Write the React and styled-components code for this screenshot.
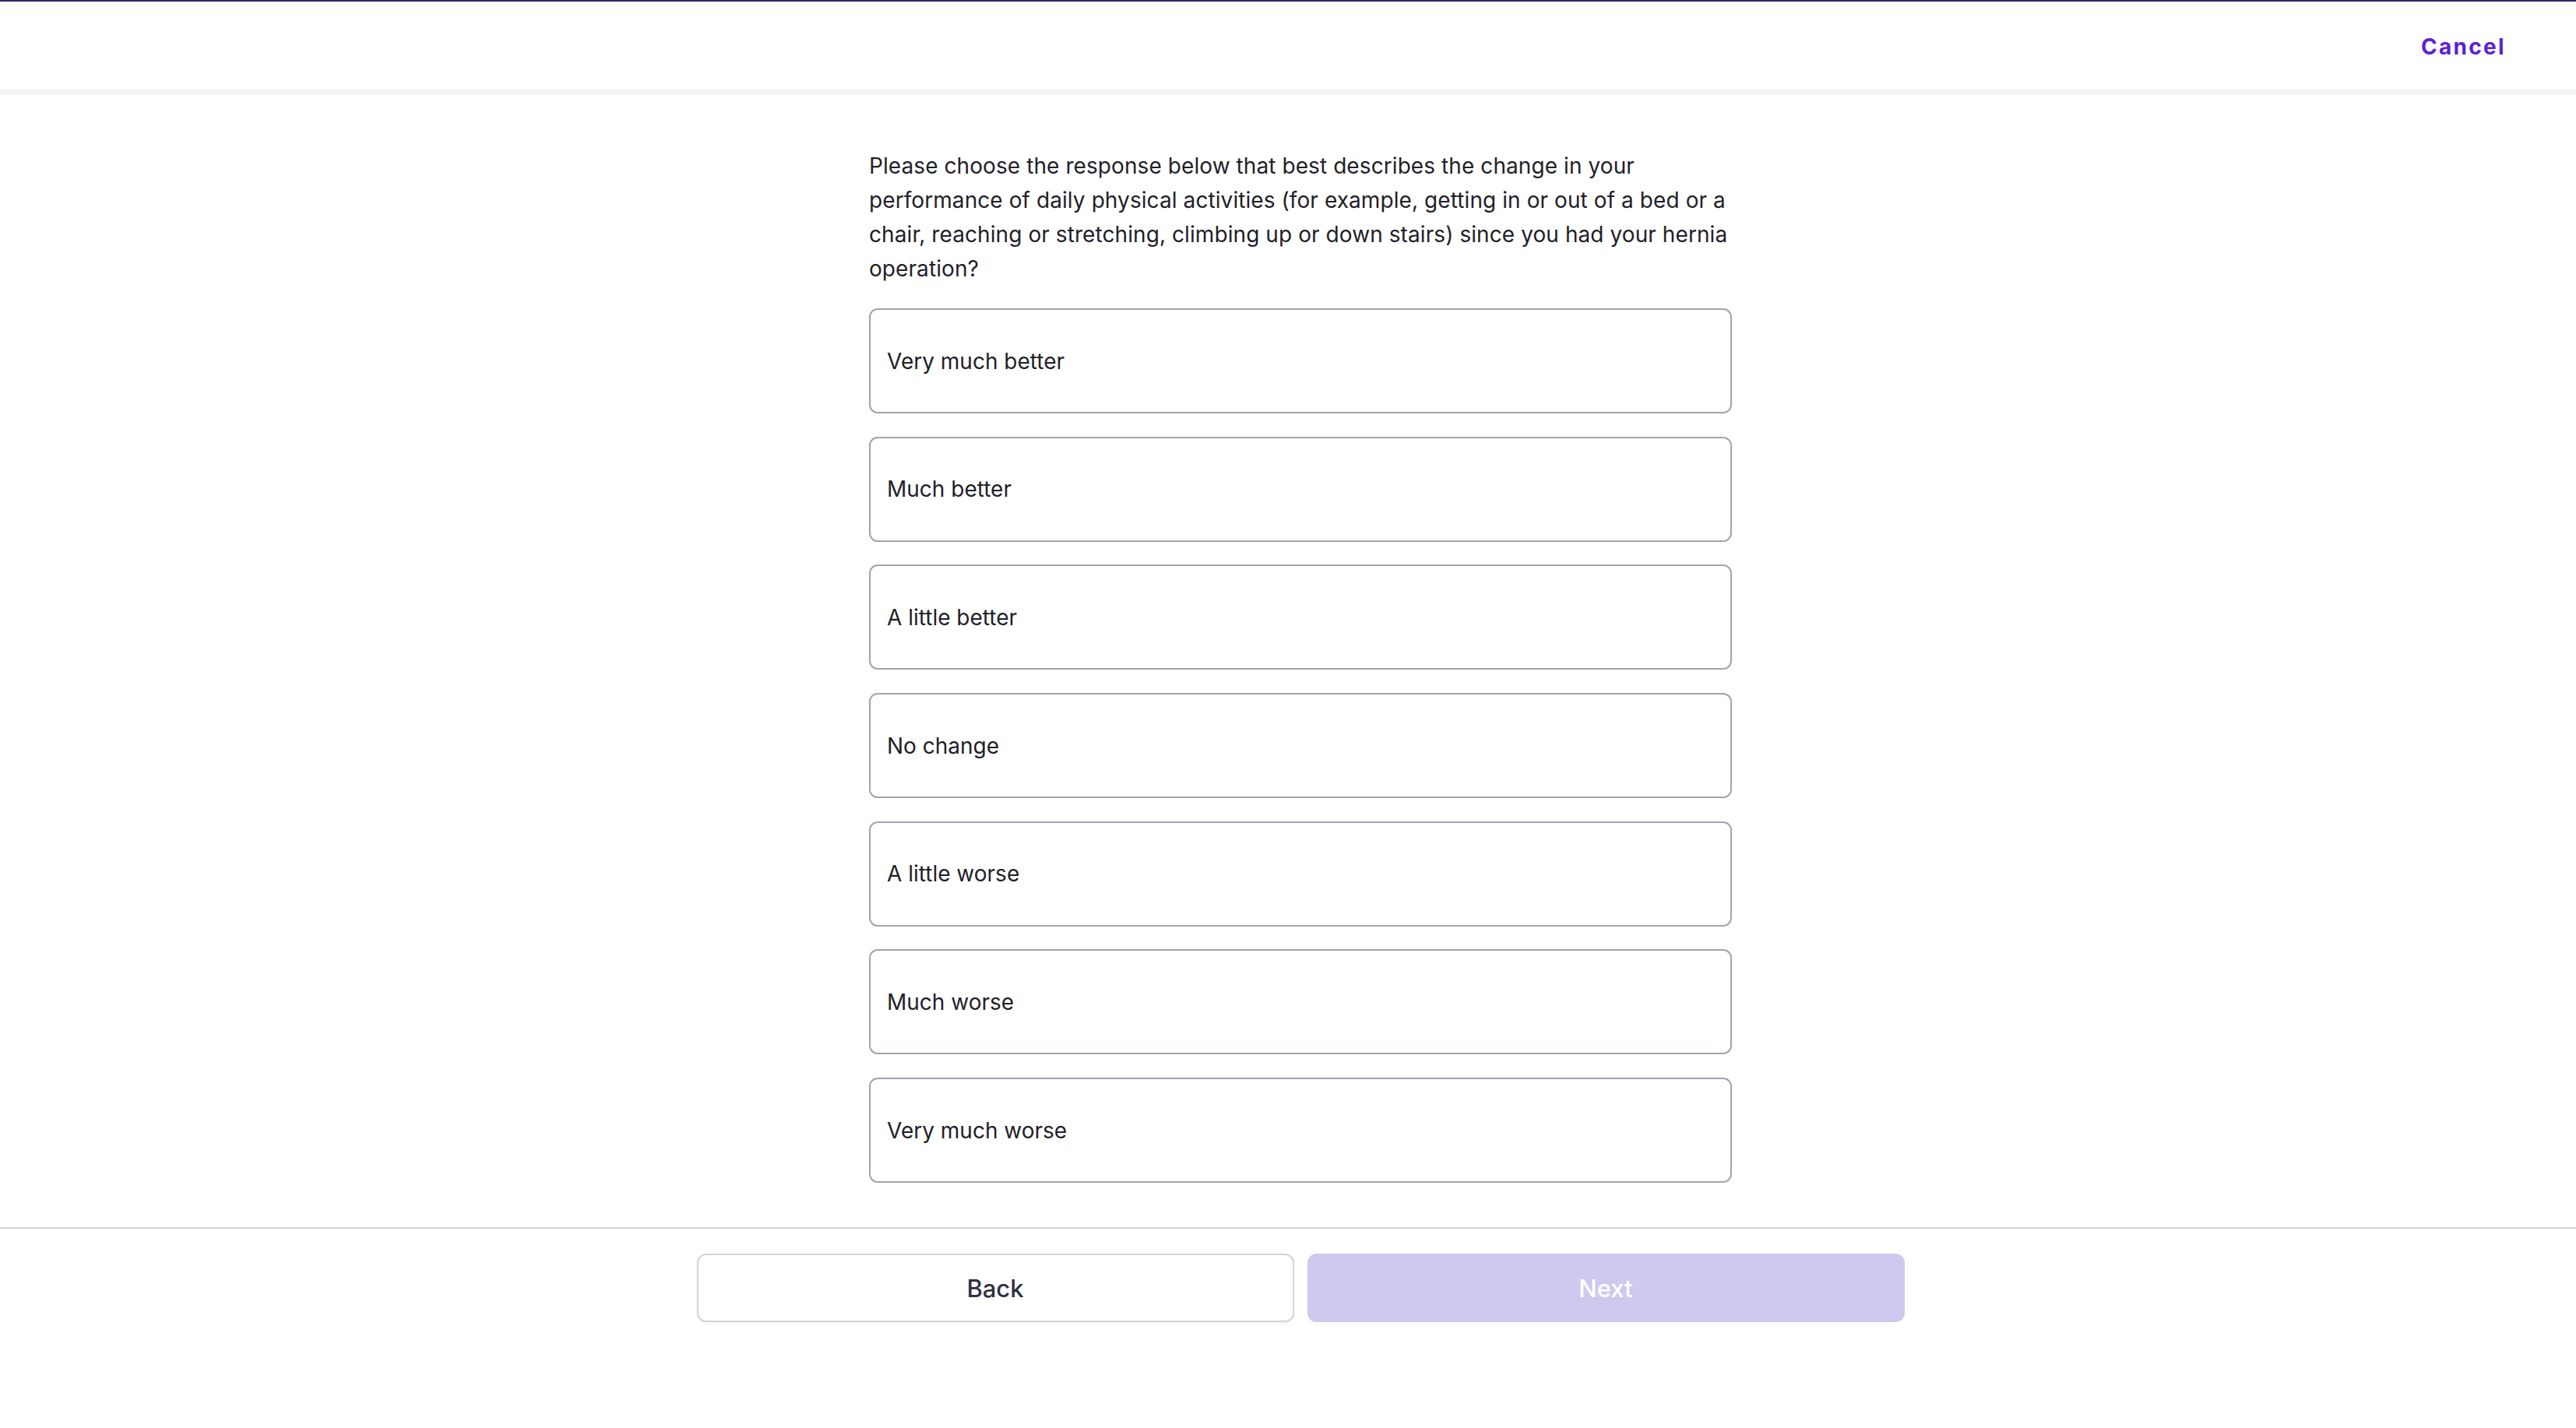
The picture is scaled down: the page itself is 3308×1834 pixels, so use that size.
import React from 'react'
import styled, { createGlobalStyle } from 'styled-components'

const GlobalStyle = createGlobalStyle`
    html, body {
        margin: 0;
        padding: 0;
        background: #fff;
        font-family: Inter, "Noto Sans", sans-serif;
        color: #1f2128;
    }
`

const Page = styled.div`
    min-height: 100vh;
    display: flex;
    flex-direction: column;
    background: #fff;
`

const TopBar = styled.header`
    height: 112px;
    border-top: 2px solid #2e2260;
    border-bottom: 8px solid #f4f4f6;
    display: flex;
    align-items: center;
    justify-content: flex-end;
    padding: 0 90px 0 0;
`

const CancelLink = styled.button`
    border: 0;
    background: none;
    padding: 0;
    margin-top: 4px;
    font-family: Inter, sans-serif;
    font-size: 28px;
    font-weight: 700;
    letter-spacing: 2.3px;
    color: #5b21d6;
    cursor: pointer;
`

const Body = styled.main`
    display: flex;
    justify-content: center;
    padding: 69px 0 0 32px;
`

const Column = styled.div`
    width: 1108px;
    display: flex;
    flex-direction: column;
`

const Question = styled.p`
    margin: 0 0 29px;
    font-size: 28px;
    line-height: 44px;
    letter-spacing: 0.08px;
    color: #1f2128;
`

const Options = styled.div`
    display: flex;
    flex-direction: column;
    gap: 29.7px;
`

const Option = styled.button`
    height: 135px;
    width: 100%;
    box-sizing: border-box;
    border: 2px solid #a0a4b0;
    border-radius: 11px;
    background: #fff;
    padding: 0 0 0 21px;
    text-align: left;
    font-family: Inter, sans-serif;
    font-size: 28px;
    color: #1f2128;
    cursor: pointer;
`

const Footer = styled.footer`
    margin-top: 57px;
    border-top: 2px solid #d4d4d6;
    padding: 32px 0 0 32px;
    display: flex;
    justify-content: center;
    gap: 17px;
`

const NavButton = styled.button`
    width: 767px;
    height: 88px;
    box-sizing: border-box;
    border-radius: 12px;
    font-family: Inter, sans-serif;
    font-size: 31px;
    font-weight: 500;
    cursor: pointer;
    border: ${p => p.$primary ? '0' : '2px solid #d3d5da'};
    background: ${p => p.$primary ? '#cfc8ef' : '#fff'};
    color: ${p => p.$primary ? '#fff' : '#2d3142'};
    box-shadow: ${p => p.$primary ? 'none' : '0 2px 3px rgba(0,0,0,0.05)'};
`

const answers = [
    'Very much better',
    'Much better',
    'A little better',
    'No change',
    'A little worse',
    'Much worse',
    'Very much worse',
]

export default function App() {
    return (
        <Page>
            <GlobalStyle />
            <TopBar>
                <CancelLink>Cancel</CancelLink>
            </TopBar>
            <Body>
                <Column>
                    <Question>
                        Please choose the response below that best describes the change in your performance of daily physical activities (for example, getting in or out of a bed or a chair, reaching or stretching, climbing up or down stairs) since you had your hernia operation?
                    </Question>
                    <Options>
                        {answers.map(a => (
                            <Option key={a}>{a}</Option>
                        ))}
                    </Options>
                </Column>
            </Body>
            <Footer>
                <NavButton>Back</NavButton>
                <NavButton $primary disabled>Next</NavButton>
            </Footer>
        </Page>
    )
}
